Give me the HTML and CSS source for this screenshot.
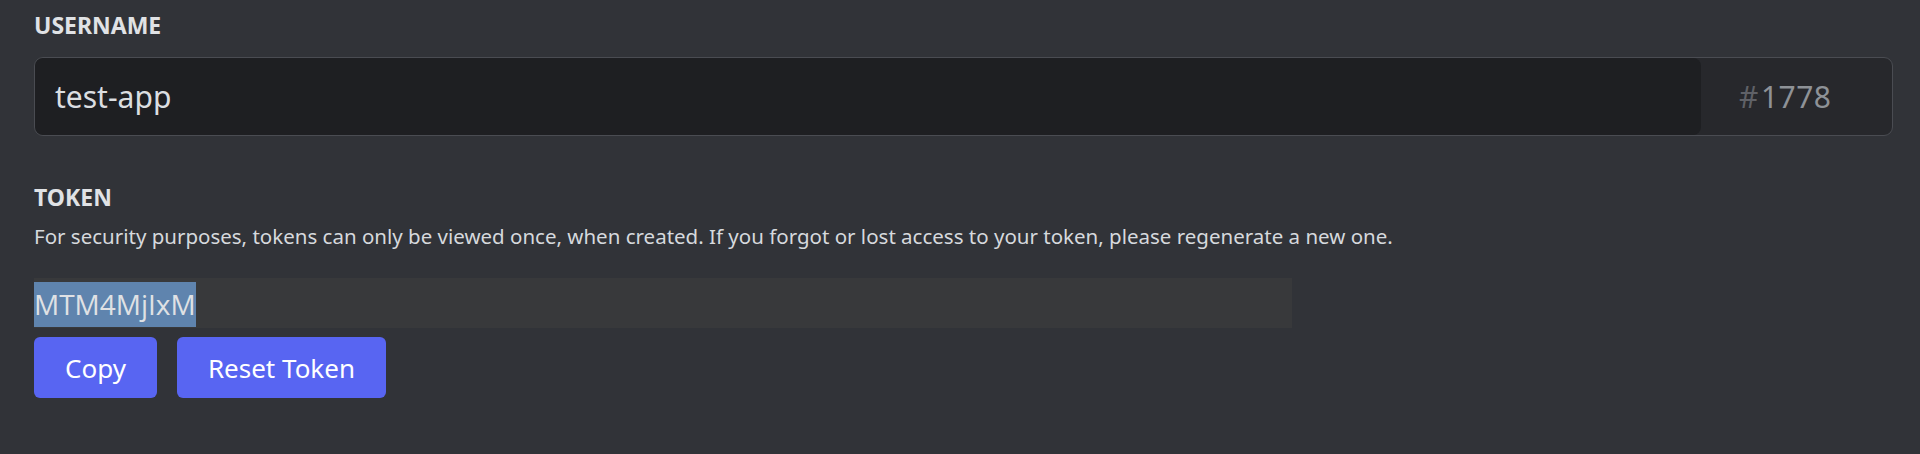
FILE: index.html
```html
<!DOCTYPE html>
<html lang="en">
<head>
<meta charset="utf-8">
<title>Bot settings</title>
<link rel="stylesheet" href="styles.css">
</head>
<body>
<main class="page">
  <section class="field">
    <h5 class="label">Username</h5>
    <div class="name-group">
      <div class="name-input">test-app</div>
      <div class="discrim"><span class="hash">#</span>1778</div>
    </div>
  </section>
  <section class="field token-field">
    <h5 class="label">Token</h5>
    <p class="desc">For security purposes, tokens can only be viewed once, when created. If you forgot or lost access to your token, please regenerate a new one.</p>
    <div class="token-box"><span class="token-sel">MTM4MjIxM</span></div>
    <div class="actions">
      <button class="btn btn-copy">Copy</button>
      <button class="btn btn-reset">Reset Token</button>
    </div>
  </section>
</main>
</body>
</html>
```

FILE: styles.css
```css
html, body {
  margin: 0;
  padding: 0;
  background: #313338;
}
body {
  font-family: "Noto Sans", "Liberation Sans", sans-serif;
  color: #dbdee1;
  height: 454px;
  overflow: hidden;
}
.page {
  padding: 11px 27px 0 34px;
}
.label {
  margin: 0;
  font-size: 23px;
  line-height: 28px;
  font-weight: 700;
  text-transform: uppercase;
  color: #e0e2e5;
  letter-spacing: 0;
}
.name-group {
  margin-top: 18px;
  display: flex;
  height: 79px;
  box-sizing: border-box;
  border: 1px solid #4a4c52;
  border-radius: 9px;
  background: #27282c;
  overflow: hidden;
}
.name-input {
  flex: 1;
  display: flex;
  align-items: center;
  padding-left: 20px;
  background: #1e1f22;
  border-radius: 8px;
  font-size: 30px;
  color: #dbdee1;
}
.discrim {
  width: 153px;
  padding-left: 38px;
  display: flex;
  align-items: center;
  font-size: 30px;
  color: #8e9297;
  letter-spacing: 0.5px;
}
.hash {
  color: #5f6167;
  margin-right: 2px;
}
.token-field {
  margin-top: 47px;
}
.desc {
  margin: 11px 0 0;
  font-size: 20.5px;
  line-height: 28px;
  color: #d6d9dd;
}
.token-box {
  margin-top: 28px;
  width: 1258px;
  height: 50px;
  box-sizing: border-box;
  padding-top: 4px;
  background: #38393b;
}
.token-sel {
  display: inline-block;
  height: 45px;
  line-height: 45px;
  font-family: "Open Sans", "Noto Sans", sans-serif;
  font-size: 28px;
  color: #dfe1e4;
  background: #5f84ae;
}
.actions {
  margin-top: 9px;
  display: flex;
  gap: 20px;
}
.btn {
  height: 61px;
  padding: 0 31px;
  border: none;
  border-radius: 6px;
  background: #5865f2;
  color: #ffffff;
  font-family: "Noto Sans", "Liberation Sans", sans-serif;
  font-size: 26px;
  font-weight: 400;
  cursor: pointer;
}
```
